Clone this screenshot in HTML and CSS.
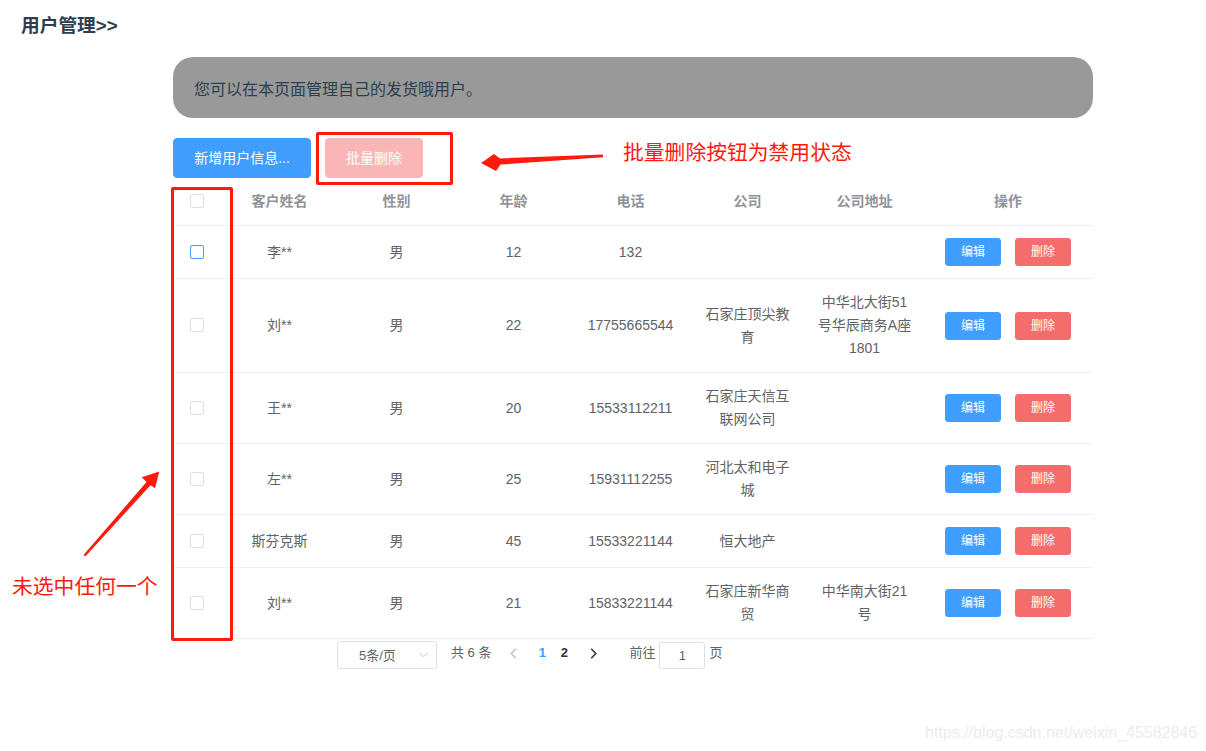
FILE: index.html
```html
<!DOCTYPE html>
<html lang="zh-CN">
<head>
<meta charset="utf-8">
<title>用户管理</title>
<link rel="stylesheet" href="styles.css">
</head>
<body>
<div class="page">
  <h3 class="title">用户管理&gt;&gt;</h3>
  <div class="main">
    <div class="banner">您可以在本页面管理自己的发货哦用户。</div>
    <div class="toolbar">
      <button class="btn btn-primary">新增用户信息...</button>
      <button class="btn btn-danger-disabled">批量删除</button>
    </div>
    <table class="grid">
      <colgroup>
        <col class="c-sel"><col class="c-mid"><col class="c-mid"><col class="c-mid"><col class="c-mid"><col class="c-mid"><col class="c-mid"><col class="c-op">
      </colgroup>
      <thead>
        <tr>
          <th><div class="cell"><span class="chk"></span></div></th>
          <th><div class="cell">客户姓名</div></th>
          <th><div class="cell">性别</div></th>
          <th><div class="cell">年龄</div></th>
          <th><div class="cell">电话</div></th>
          <th><div class="cell">公司</div></th>
          <th><div class="cell">公司地址</div></th>
          <th><div class="cell">操作</div></th>
        </tr>
      </thead>
      <tbody>
        <tr>
          <td><div class="cell"><span class="chk chk-hover"></span></div></td>
          <td><div class="cell">李**</div></td>
          <td><div class="cell">男</div></td>
          <td><div class="cell">12</div></td>
          <td><div class="cell">132</div></td>
          <td><div class="cell"></div></td>
          <td><div class="cell"></div></td>
          <td><div class="cell ops"><button class="mini mini-edit">编辑</button><button class="mini mini-del">删除</button></div></td>
        </tr>
        <tr>
          <td><div class="cell"><span class="chk"></span></div></td>
          <td><div class="cell">刘**</div></td>
          <td><div class="cell">男</div></td>
          <td><div class="cell">22</div></td>
          <td><div class="cell">17755665544</div></td>
          <td><div class="cell">石家庄顶尖教育</div></td>
          <td><div class="cell">中华北大街51号华辰商务A座1801</div></td>
          <td><div class="cell ops"><button class="mini mini-edit">编辑</button><button class="mini mini-del">删除</button></div></td>
        </tr>
        <tr>
          <td><div class="cell"><span class="chk"></span></div></td>
          <td><div class="cell">王**</div></td>
          <td><div class="cell">男</div></td>
          <td><div class="cell">20</div></td>
          <td><div class="cell">15533112211</div></td>
          <td><div class="cell">石家庄天信互联网公司</div></td>
          <td><div class="cell"></div></td>
          <td><div class="cell ops"><button class="mini mini-edit">编辑</button><button class="mini mini-del">删除</button></div></td>
        </tr>
        <tr>
          <td><div class="cell"><span class="chk"></span></div></td>
          <td><div class="cell">左**</div></td>
          <td><div class="cell">男</div></td>
          <td><div class="cell">25</div></td>
          <td><div class="cell">15931112255</div></td>
          <td><div class="cell">河北太和电子城</div></td>
          <td><div class="cell"></div></td>
          <td><div class="cell ops"><button class="mini mini-edit">编辑</button><button class="mini mini-del">删除</button></div></td>
        </tr>
        <tr>
          <td><div class="cell"><span class="chk"></span></div></td>
          <td><div class="cell">斯芬克斯</div></td>
          <td><div class="cell">男</div></td>
          <td><div class="cell">45</div></td>
          <td><div class="cell">15533221144</div></td>
          <td><div class="cell">恒大地产</div></td>
          <td><div class="cell"></div></td>
          <td><div class="cell ops"><button class="mini mini-edit">编辑</button><button class="mini mini-del">删除</button></div></td>
        </tr>
        <tr>
          <td><div class="cell"><span class="chk"></span></div></td>
          <td><div class="cell">刘**</div></td>
          <td><div class="cell">男</div></td>
          <td><div class="cell">21</div></td>
          <td><div class="cell">15833221144</div></td>
          <td><div class="cell">石家庄新华商贸</div></td>
          <td><div class="cell">中华南大街21号</div></td>
          <td><div class="cell ops"><button class="mini mini-edit">编辑</button><button class="mini mini-del">删除</button></div></td>
        </tr>
      </tbody>
    </table>
    <div class="pager">
      <div class="sizes">
        <span class="sizes-text">5条/页</span>
        <svg class="sizes-arrow" width="9" height="6" viewBox="0 0 9 6"><polyline points="0.5,0.8 4.5,4.8 8.5,0.8" fill="none" stroke="#c0c4cc" stroke-width="1"/></svg>
      </div>
      <span class="total">共 6 条</span>
      <span class="nav nav-prev"><svg width="7" height="11" viewBox="0 0 7 11"><polyline points="5.8,0.8 1.2,5.5 5.8,10.2" fill="none" stroke="#c0c4cc" stroke-width="1.5"/></svg></span>
      <span class="num num-active">1</span>
      <span class="num">2</span>
      <span class="nav nav-next"><svg width="7" height="11" viewBox="0 0 7 11"><polyline points="1.2,0.8 5.8,5.5 1.2,10.2" fill="none" stroke="#303133" stroke-width="1.5"/></svg></span>
      <span class="jump">前往</span>
      <span class="jump-input">1</span>
      <span class="jump-unit">页</span>
    </div>
  </div>

  <div class="mark mark-top"></div>
  <div class="mark mark-left"></div>
  <div class="note note-top">批量删除按钮为禁用状态</div>
  <div class="note note-left">未选中任何一个</div>
  <svg class="arrows" width="1206" height="751" viewBox="0 0 1206 751">
    <polygon points="603,154.6 500,158.4 494,154 481,163 496,171 500.5,164.6 603,157.2" fill="#ff1a0d"/>
    <polygon points="83.5,555 146.5,482 141.7,477.2 159.3,471.6 155,488.3 150.5,485.3 85.5,556.2" fill="#ff1a0d"/>
  </svg>
  <div class="watermark">https://blog.csdn.net/weixin_45582846</div>
</div>
</body>
</html>
```
FILE: styles.css
```css
* { box-sizing: border-box; }
html, body {
  margin: 0;
  padding: 0;
  background: #fff;
}
body {
  font-family: "Liberation Sans", "Noto Sans CJK SC", sans-serif;
  color: #606266;
  width: 1206px;
  height: 751px;
  overflow: hidden;
}
.page {
  position: relative;
  width: 1206px;
  height: 751px;
}
.title {
  margin: 0;
  padding: 13px 0 0 21px;
  height: 57px;
  font-size: 18.72px;
  line-height: 26px;
  font-weight: bold;
  color: #2c3e50;
}
.main {
  margin-left: 173px;
  width: 920px;
}
.banner {
  height: 61px;
  border-radius: 20px;
  background: #999999;
  color: #2c3e50;
  font-size: 16px;
  display: flex;
  align-items: center;
  padding-left: 21px;
}
.toolbar {
  margin-top: 20px;
  display: flex;
  gap: 14px;
}
.btn {
  height: 40px;
  padding: 0 20px;
  border-radius: 4px;
  font-family: inherit;
  font-size: 14px;
  color: #fff;
  border: 1px solid transparent;
  line-height: 38px;
}
.btn-primary {
  width: 138px;
  background: #409eff;
  border-color: #409eff;
}
.btn-danger-disabled {
  width: 98px;
  background: #fab6b6;
  border-color: #fab6b6;
}
.grid {
  width: 920px;
  table-layout: fixed;
  border-collapse: separate;
  border-spacing: 0;
}
.c-sel { width: 48px; }
.c-mid { width: 117px; }
.c-op { width: 170px; }
.grid th, .grid td {
  padding: 12px 0;
  border-bottom: 1px solid #ebeef5;
  text-align: center;
  vertical-align: middle;
  font-size: 14px;
}
.grid th {
  color: #909399;
  font-weight: bold;
}
.grid td { color: #606266; }
.cell {
  padding: 0 10px;
  line-height: 23px;
  word-break: break-all;
}
.chk {
  display: inline-block;
  width: 14px;
  height: 14px;
  border: 1px solid #dcdfe6;
  border-radius: 2px;
  background: #fff;
  vertical-align: middle;
  position: relative;
  top: -1px;
}
.chk-hover { border-color: #409eff; }
.ops {
  display: flex;
  justify-content: center;
  gap: 14px;
}
.mini {
  width: 56px;
  height: 28px;
  padding: 0;
  border: 1px solid transparent;
  border-radius: 3px;
  font-family: inherit;
  font-size: 12px;
  color: #fff;
  line-height: 26px;
}
.mini-edit { background: #409eff; border-color: #409eff; }
.mini-del { background: #f56c6c; border-color: #f56c6c; }
.pager {
  margin-top: 2px;
  padding-left: 164px;
  display: flex;
  align-items: center;
  height: 28px;
  font-size: 13px;
  color: #606266;
}
.sizes {
  width: 100px;
  height: 28px;
  border: 1px solid #dcdfe6;
  border-radius: 3px;
  display: flex;
  align-items: center;
  justify-content: space-between;
  padding: 0 8px 0 21px;
  line-height: 26px;
}
.sizes-text { position: relative; top: 1px; }
.total { margin-left: 14px; line-height: 28px; position: relative; top: -2px; }
.nav {
  width: 28px;
  height: 28px;
  display: flex;
  align-items: center;
  justify-content: center;
  position: relative;
  top: -2px;
}
.nav-prev { margin-left: 8px; }
.num {
  width: 22px;
  text-align: center;
  font-weight: bold;
  color: #303133;
  line-height: 28px;
  position: relative;
  top: -2px;
}
.num-active { color: #409eff; margin-left: 4px; }
.nav-next { margin-left: 4px; }
.jump { margin-left: 22px; line-height: 28px; position: relative; top: -2px; }
.jump-input {
  margin-left: 4px;
  width: 46px;
  height: 27px;
  border: 1px solid #dcdfe6;
  border-radius: 3px;
  text-align: center;
  line-height: 25px;
}
.jump-unit { margin-left: 4px; line-height: 28px; position: relative; top: -2px; }

.mark {
  position: absolute;
  border: 3px solid #ff1a0d;
  border-radius: 2px;
}
.mark-top { left: 316px; top: 132px; width: 137px; height: 53px; }
.mark-left { left: 171px; top: 187px; width: 62px; height: 454px; }
.note {
  position: absolute;
  color: #ff1a0d;
  font-size: 20.8px;
  line-height: 26px;
  white-space: nowrap;
}
.note-top { left: 623px; top: 140px; }
.note-left { left: 12px; top: 574px; }
.arrows {
  position: absolute;
  left: 0;
  top: 0;
  pointer-events: none;
}
.watermark {
  position: absolute;
  left: 925px;
  top: 723px;
  font-size: 16px;
  line-height: 20px;
  color: #ececec;
  white-space: nowrap;
}
```
